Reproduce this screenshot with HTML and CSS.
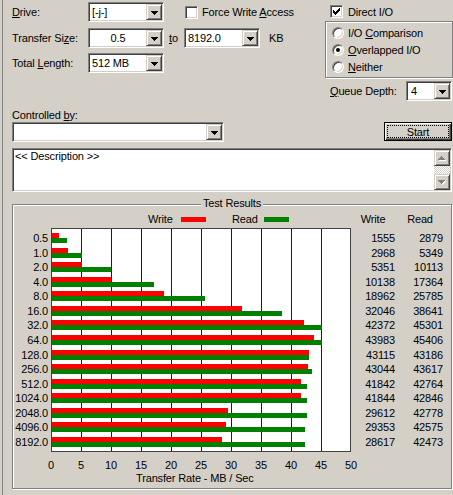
FILE: index.html
```html
<!DOCTYPE html>
<html>
<head>
<meta charset="utf-8">
<title>Disk Benchmark</title>
<link rel="stylesheet" href="styles.css">
</head>
<body>
<div class="win">
  <div class="top">
    <div class="left">
      <div class="row r1">
        <span class="lbl"><u>D</u>rive:</span>
        <div class="combo w76"><span class="val">[-j-]</span><span class="dd"><svg width="7" height="4" viewBox="0 0 7 4"><path d="M0 0h7v1h-1v1h-1v1h-1v1h-1v-1h-1v-1h-1v-1h-1z"/></svg></span></div>
        <span class="check force"><span class="box"></span><span class="ctext">Force Write <u>A</u>ccess</span></span>
      </div>
      <div class="row r2">
        <span class="lbl">Transfer Si<u>z</u>e:</span>
        <div class="combo w76"><span class="val center">0.5</span><span class="dd"><svg width="7" height="4" viewBox="0 0 7 4"><path d="M0 0h7v1h-1v1h-1v1h-1v1h-1v-1h-1v-1h-1v-1h-1z"/></svg></span></div>
        <span class="to"><u>t</u>o</span>
        <div class="combo w76"><span class="val">8192.0</span><span class="dd"><svg width="7" height="4" viewBox="0 0 7 4"><path d="M0 0h7v1h-1v1h-1v1h-1v1h-1v-1h-1v-1h-1v-1h-1z"/></svg></span></div>
        <span class="kb">KB</span>
      </div>
      <div class="row r3">
        <span class="lbl">Total <u>L</u>ength:</span>
        <div class="combo w76"><span class="val">512 MB</span><span class="dd"><svg width="7" height="4" viewBox="0 0 7 4"><path d="M0 0h7v1h-1v1h-1v1h-1v1h-1v-1h-1v-1h-1v-1h-1z"/></svg></span></div>
      </div>
    </div>
    <div class="right">
      <div class="check direct"><span class="box"><svg width="7" height="7" viewBox="0 0 7 7" shape-rendering="crispEdges"><path d="M0 2h1v3h-1z M1 3h1v3h-1z M2 4h1v3h-1z M3 3h1v3h-1z M4 2h1v3h-1z M5 1h1v3h-1z M6 0h1v3h-1z"/></svg></span><span class="ctext">Direct I/O</span></div>
      <div class="radios">
        <div class="radio-row"><span class="radio"></span><span class="rtext">I/O <u>C</u>omparison</span></div>
        <div class="radio-row"><span class="radio on"></span><span class="rtext"><u>O</u>verlapped I/O</span></div>
        <div class="radio-row"><span class="radio"></span><span class="rtext"><u>N</u>either</span></div>
      </div>
      <div class="row queue">
        <span class="lbl"><u>Q</u>ueue Depth:</span>
        <div class="combo w46"><span class="val qv">4</span><span class="dd"><svg width="7" height="4" viewBox="0 0 7 4"><path d="M0 0h7v1h-1v1h-1v1h-1v1h-1v-1h-1v-1h-1v-1h-1z"/></svg></span></div>
      </div>
    </div>
  </div>

  <div class="ctl-label">Controlled <u>b</u>y:</div>
  <div class="ctl-row">
    <div class="combo w212"><span class="val"></span><span class="dd"><svg width="7" height="4" viewBox="0 0 7 4"><path d="M0 0h7v1h-1v1h-1v1h-1v1h-1v-1h-1v-1h-1v-1h-1z"/></svg></span></div>
    <div class="start"><span>Start</span></div>
  </div>

  <div class="desc">
    <div class="desc-text">&lt;&lt; Description &gt;&gt;</div>
    <div class="sb">
      <div class="sbtn"><svg width="8" height="5" viewBox="0 0 8 5"><path fill="#fff" d="M4 1h1v1h1v1h1v1h1v1h-7v-1h1v-1h1v-1h1z"/><path fill="#808080" d="M3 0h1v1h1v1h1v1h1v1h-7v-1h1v-1h1v-1h1z"/></svg></div>
      <div class="track"></div>
      <div class="sbtn"><svg width="8" height="5" viewBox="0 0 8 5"><path fill="#fff" d="M1 1h7v1h-1v1h-1v1h-1v1h-1v-1h-1v-1h-1v-1h-1z"/><path fill="#808080" d="M0 0h7v1h-1v1h-1v1h-1v1h-1v-1h-1v-1h-1v-1h-1z"/></svg></div>
    </div>
  </div>

  <div class="group">
    <div class="gtitle"><span>Test Results</span></div>
    <div class="legend-row">
      <div class="sp"></div>
      <div class="legend">
        <span class="lg-w">Write</span><span class="sw red"></span>
        <span class="lg-r">Read</span><span class="sw green"></span>
      </div>
      <div class="hdr-w">Write</div>
      <div class="hdr-r">Read</div>
    </div>
    <div class="chart-row">
      <div class="ylabels">
        <div>0.5</div><div>1.0</div><div>2.0</div><div>4.0</div><div>8.0</div>
        <div>16.0</div><div>32.0</div><div>64.0</div><div>128.0</div><div>256.0</div>
        <div>512.0</div><div>1024.0</div><div>2048.0</div><div>4096.0</div><div>8192.0</div>
      </div>
      <div class="plot">
        <div class="bar-row"><div class="w" style="width:7px"></div><div class="r" style="width:15px"></div></div>
        <div class="bar-row"><div class="w" style="width:16px"></div><div class="r" style="width:30px"></div></div>
        <div class="bar-row"><div class="w" style="width:30px"></div><div class="r" style="width:59px"></div></div>
        <div class="bar-row"><div class="w" style="width:59px"></div><div class="r" style="width:102px"></div></div>
        <div class="bar-row"><div class="w" style="width:112px"></div><div class="r" style="width:153px"></div></div>
        <div class="bar-row"><div class="w" style="width:190px"></div><div class="r" style="width:230px"></div></div>
        <div class="bar-row"><div class="w" style="width:252px"></div><div class="r" style="width:270px"></div></div>
        <div class="bar-row"><div class="w" style="width:262px"></div><div class="r" style="width:270px"></div></div>
        <div class="bar-row"><div class="w" style="width:257px"></div><div class="r" style="width:257px"></div></div>
        <div class="bar-row"><div class="w" style="width:256px"></div><div class="r" style="width:260px"></div></div>
        <div class="bar-row"><div class="w" style="width:249px"></div><div class="r" style="width:255px"></div></div>
        <div class="bar-row"><div class="w" style="width:249px"></div><div class="r" style="width:255px"></div></div>
        <div class="bar-row"><div class="w" style="width:176px"></div><div class="r" style="width:255px"></div></div>
        <div class="bar-row"><div class="w" style="width:174px"></div><div class="r" style="width:253px"></div></div>
        <div class="bar-row"><div class="w" style="width:170px"></div><div class="r" style="width:253px"></div></div>
      </div>
      <div class="nums write">
        <div>1555</div><div>2968</div><div>5351</div><div>10138</div><div>18962</div>
        <div>32046</div><div>42372</div><div>43983</div><div>43115</div><div>43044</div>
        <div>41842</div><div>41844</div><div>29612</div><div>29353</div><div>28617</div>
      </div>
      <div class="nums read">
        <div>2879</div><div>5349</div><div>10113</div><div>17364</div><div>25785</div>
        <div>38641</div><div>45301</div><div>45406</div><div>43186</div><div>43617</div>
        <div>42764</div><div>42846</div><div>42778</div><div>42575</div><div>42473</div>
      </div>
    </div>
    <div class="xaxis">
      <span>0</span><span>5</span><span>10</span><span>15</span><span>20</span><span>25</span>
      <span>30</span><span>35</span><span>40</span><span>45</span><span>50</span>
    </div>
    <div class="xtitle">Transfer Rate - MB / Sec</div>
  </div>
</div>
</body>
</html>
```
FILE: styles.css
```css
* { box-sizing: border-box; }
html, body { margin: 0; padding: 0; }
body {
  width: 453px;
  height: 495px;
  overflow: hidden;
  background: #d4d0c8;
  font-family: "Liberation Sans", Arial, sans-serif;
  font-size: 11px;
  letter-spacing: -0.15px;
  color: #000;
}
u { text-decoration: underline; text-underline-offset: 1px; }
svg { display: block; }

.win {
  margin-left: 2px;
  border-left: 1px solid #808080;
  height: 495px;
  padding-left: 9px;
}

/* top block */
.top { display: flex; height: 101px; }
.left { width: 313px; }
.right { width: 128px; }

.row { display: flex; align-items: center; height: 20px; white-space: nowrap; }
.r1 { margin-top: 2px; }
.r2 { margin-top: 6px; }
.r3 { margin-top: 5px; }
.lbl { width: 76px; white-space: nowrap; }

.combo {
  display: flex;
  height: 20px;
  background: #fff;
  border: 1px solid;
  border-color: #808080 #fff #fff #808080;
  box-shadow: inset 1px 1px #404040, inset -1px -1px #d4d0c8;
  padding: 1px;
}
.w76 { width: 76px; }
.w46 { width: 46px; }
.w212 { width: 212px; }
.val { flex: 1; padding-left: 2px; line-height: 16px; white-space: nowrap; overflow: hidden; }
.val.center { text-align: center; padding-left: 0; }
.val.qv { padding-left: 3px; }
.dd {
  width: 16px;
  height: 16px;
  background: #d4d0c8;
  border: 1px solid;
  border-color: #d4d0c8 #404040 #404040 #d4d0c8;
  box-shadow: inset 1px 1px #fff, inset -1px -1px #808080;
  display: flex;
  align-items: center;
  justify-content: center;
}
.dd svg { fill: #000; margin-top: 1px; }

.to { margin-left: 5px; width: 15px; }
.kb { margin-left: 9px; }

.check { display: flex; align-items: center; white-space: nowrap; }
.force { margin-left: 21px; }
.box {
  width: 13px;
  height: 13px;
  background: #fff;
  border: 1px solid;
  border-color: #808080 #fff #fff #808080;
  box-shadow: inset 1px 1px #404040, inset -1px -1px #d4d0c8;
  display: flex;
  align-items: center;
  justify-content: center;
}
.box svg { fill: #000; }
.ctext { margin-left: 4px; }
.direct { margin-top: 2px; height: 19px; padding-left: 5px; }
.direct .ctext { margin-left: 5px; }

.radios {
  height: 57px;
  border: 1px solid #808080;
  box-shadow: inset 1px 1px #fff, 1px 1px #fff;
  padding: 2px 0 0 6px;
}
.radio-row { display: flex; align-items: center; height: 17px; white-space: nowrap; }
.radio {
  position: relative;
  width: 12px;
  height: 12px;
  border-radius: 50%;
  background: #fff;
  border: 1px solid;
  border-color: #808080 #fff #fff #808080;
  box-shadow: inset 1px 1px #404040, inset -1px -1px #d4d0c8;
  flex: none;
}
.radio.on::after {
  content: "";
  position: absolute;
  left: 3px;
  top: 3px;
  width: 4px;
  height: 4px;
  border-radius: 50%;
  background: #000;
}
.rtext { margin-left: 4px; }
.queue { margin-top: 3px; padding-left: 5px; }

/* controlled by */
.ctl-label { margin-top: 8px; height: 12px; line-height: 12px; }
.ctl-row {
  margin-top: 1px;
  width: 440px;
  height: 20px;
  display: flex;
  justify-content: space-between;
  align-items: flex-start;
}
.start {
  width: 68px;
  height: 19px;
  border: 1px solid #000;
  background: #d4d0c8;
  box-shadow: inset 1px 1px #fff, inset -1px -1px #404040, inset -2px -2px #808080;
  padding: 2px;
  display: flex;
}
.start span {
  flex: 1;
  border: 1px dotted #000;
  display: flex;
  align-items: center;
  justify-content: center;
}

/* description */
.desc {
  margin-top: 6px;
  width: 440px;
  height: 44px;
  background: #fff;
  border: 1px solid;
  border-color: #808080 #fff #fff #808080;
  box-shadow: inset 1px 1px #404040, inset -1px -1px #d4d0c8;
  padding: 1px;
  display: flex;
}
.desc-text { flex: 1; line-height: 13px; padding-left: 1px; }
.sb { width: 16px; display: flex; flex-direction: column; }
.sbtn {
  height: 16px;
  background: #d4d0c8;
  border: 1px solid;
  border-color: #d4d0c8 #404040 #404040 #d4d0c8;
  box-shadow: inset 1px 1px #fff, inset -1px -1px #808080;
  display: flex;
  align-items: center;
  justify-content: center;
}
.track {
  flex: 1;
  background-image: repeating-conic-gradient(#fff 0 25%, #d4d0c8 0 50%);
  background-size: 2px 2px;
}

/* test results */
.group {
  position: relative;
  margin-top: 12px;
  width: 440px;
  height: 285px;
  border: 1px solid #808080;
  box-shadow: inset 1px 1px #fff, 1px 1px #fff;
  padding-top: 7px;
}
.gtitle {
  position: absolute;
  top: -8px;
  left: 0;
  right: 0;
  text-align: center;
  line-height: 13px;
}
.gtitle span { background: #d4d0c8; padding: 0 2px; }

.legend-row { display: flex; height: 14px; line-height: 14px; margin-bottom: 2px; }
.sp { width: 38px; }
.legend { width: 300px; display: flex; align-items: center; padding-left: 97px; }
.lg-w { width: 33px; }
.lg-r { width: 32px; }
.sw { width: 25px; height: 5px; }
.sw.red { background: #f00; margin-right: 26px; }
.sw.green { background: #008000; }
.hdr-w { width: 44px; text-align: center; }
.hdr-r { width: 48px; text-align: center; padding-left: 2px; }

.chart-row { display: flex; height: 224px; }
.ylabels, .nums {
  display: flex;
  flex-direction: column;
  justify-content: space-between;
  padding: 5px 0;
  text-align: right;
}
.ylabels { width: 38px; padding-right: 3px; }
.ylabels div, .nums div { height: 10px; line-height: 10px; white-space: nowrap; }
.nums.write { width: 44px; }
.nums.read { width: 48px; }

.plot {
  width: 300px;
  height: 224px;
  border: 1px solid #404040;
  background: #fff repeating-linear-gradient(to right, #fff 0 29px, #00f 29px 30px);
  padding: 4px 0;
  display: flex;
  flex-direction: column;
  justify-content: space-between;
}
.bar-row { height: 10px; }
.bar-row .w { height: 5px; background: #f00; }
.bar-row .r { height: 5px; background: #008000; }

.xaxis { display: flex; margin-top: 8px; margin-left: 23px; height: 11px; line-height: 11px; }
.xaxis span { width: 30px; text-align: center; }
.xtitle { margin-top: 1px; margin-left: 123px; height: 12px; line-height: 12px; white-space: nowrap; }
```
